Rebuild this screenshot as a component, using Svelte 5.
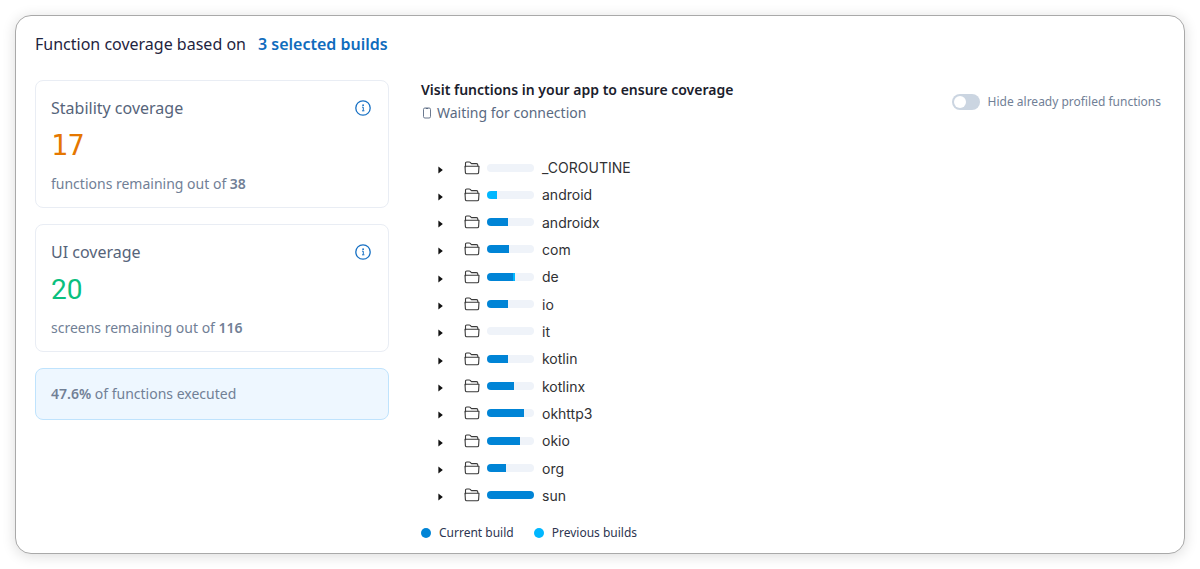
<script>
  const cards = [
    { id: 'stability', title: 'Stability coverage', value: 17, unit: 'functions', total: 38 },
    { id: 'ui', title: 'UI coverage', value: 20, unit: 'screens', total: 116 }
  ];

  const packages = [
    { name: '_COROUTINE', current: 0, previous: 0 },
    { name: 'android', current: 0, previous: 21 },
    { name: 'androidx', current: 45, previous: 0 },
    { name: 'com', current: 47, previous: 0 },
    { name: 'de', current: 55, previous: 4 },
    { name: 'io', current: 44, previous: 0 },
    { name: 'it', current: 0, previous: 0 },
    { name: 'kotlin', current: 44, previous: 0 },
    { name: 'kotlinx', current: 57, previous: 0 },
    { name: 'okhttp3', current: 79, previous: 0 },
    { name: 'okio', current: 71, previous: 0 },
    { name: 'org', current: 40, previous: 0 },
    { name: 'sun', current: 100, previous: 0 }
  ];

  let hideProfiled = $state(false);
</script>

<main class="panel">
  <header>
    <h1>Function coverage based on</h1>
    <a href="#builds">3 selected builds</a>
  </header>

  <div class="columns">
    <section class="summary">
      {#each cards as card (card.id)}
        <article class="card">
          <div class="card-head">
            <h2>{card.title}</h2>
            <button class="info" type="button" aria-label="About {card.title}">
              <svg viewBox="0 0 16 16" width="16" height="16" fill="none" stroke="currentColor">
                <circle cx="8" cy="8" r="7.2" stroke-width="1.3" />
                <path d="M7 7.2h1.3v3.4M7 10.8h2.4" stroke-width="1" />
                <circle cx="8.1" cy="5.2" r=".9" fill="currentColor" stroke="none" />
              </svg>
            </button>
          </div>
          <p class="value {card.id}">{card.value}</p>
          <p class="note">{card.unit} remaining out of <strong>{card.total}</strong></p>
        </article>
      {/each}
      <p class="executed note"><strong>47.6%</strong> of functions executed</p>
    </section>

    <section class="detail">
      <div class="detail-head">
        <div>
          <h2 class="visit">Visit functions in your app to ensure coverage</h2>
          <p class="status">
            <svg viewBox="0 0 12 16" width="12" height="16" fill="none" stroke="currentColor">
              <rect x="2.5" y="3" width="7" height="10" rx="1.4" stroke-width=".9" />
              <path d="M4.8 3.5h2.4" stroke-width="1" />
            </svg>
            Waiting for connection
          </p>
        </div>
        <label class="switch">
          <input type="checkbox" role="switch" bind:checked={hideProfiled} />
          Hide already profiled functions
        </label>
      </div>

      <ul class="tree">
        {#each packages as item (item.name)}
          <li>
            <button class="toggle" type="button" aria-label="Expand {item.name}">
              <svg viewBox="0 0 5 8" width="5" height="8"><path d="M.4 .6 4.8 4 .4 7.4z" fill="currentColor" /></svg>
            </button>
            <svg class="folder" viewBox="0 0 16 14" width="16" height="14" fill="none" stroke="currentColor" stroke-width="1.1" stroke-linejoin="round">
              <path d="M1.5 6.2V2.2Q1.5 1 2.7 1h2.6q.5 0 .9.4l1.2 1.2h5q1.4 0 1.4 1.3v1.3" />
              <path d="M1 5.2h14l-.4 6.4q-.1 1.2-1.3 1.2H2.7q-1.2 0-1.3-1.2z" />
            </svg>
            <span class="bar">
              <span class="current" style="width: {item.current}%"></span>
              <span class="previous" style="width: {item.previous}%"></span>
            </span>
            <span class="name">{item.name}</span>
          </li>
        {/each}
      </ul>

      <div class="legend">
        <span class="key"><i class="current"></i>Current build</span>
        <span class="key"><i class="previous"></i>Previous builds</span>
      </div>
    </section>
  </div>
</main>

<style>
  :global(body) {
    background: #fff;
  }
  h1, h2, p, ul {
    margin: 0;
    padding: 0;
    font-weight: 400;
  }
  button {
    display: flex;
    padding: 0;
    border: 0;
    background: none;
    cursor: pointer;
  }
  strong {
    font-weight: 600;
  }
  .panel {
    box-sizing: border-box;
    margin: 15px;
    padding: 16px 20px 10px 19px;
    border: 1px solid #a9a9a9;
    border-radius: 16px;
    background: #fff;
    box-shadow: 0 2px 14px rgba(0, 0, 0, 0.14);
    font: 14px/20px "Noto Sans", sans-serif;
    color: #1a202c;
  }
  header {
    display: flex;
    gap: 12px;
    line-height: 24px;
  }
  h1 {
    font-size: 16px;
    line-height: 24px;
    color: #1f2440;
  }
  header a {
    font-size: 16px;
    font-weight: 600;
    color: #0f6cbd;
    text-decoration: none;
  }
  .columns {
    display: grid;
    grid-template-columns: 354px 1fr;
    gap: 32px;
    margin-top: 24px;
  }
  .summary {
    display: flex;
    flex-direction: column;
    gap: 16px;
  }
  .card {
    padding: 15px 15px 13px;
    border: 1px solid #e9edf4;
    border-radius: 8px;
  }
  .card-head {
    display: flex;
    align-items: center;
    justify-content: space-between;
    padding-right: 2px;
  }
  .card h2 {
    font-size: 16px;
    line-height: 24px;
    color: #56647a;
  }
  .info {
    color: #1871c4;
  }
  .value {
    margin: 6px 0 8px;
    font-size: 28px;
    line-height: 40px;
  }
  .stability {
    font-family: "DejaVu Sans Mono", monospace;
    color: #e57700;
  }
  .ui {
    font-family: Roboto, sans-serif;
    color: #0abf7e;
  }
  .note {
    color: #718096;
  }
  .executed {
    padding: 15px;
    border: 1px solid #bfe3fd;
    border-radius: 8px;
    background: #eef7ff;
  }
  .detail-head {
    display: flex;
    justify-content: space-between;
    align-items: center;
    padding-right: 3px;
  }
  .visit {
    font-size: 14px;
    font-weight: 600;
    line-height: 20px;
  }
  .status {
    display: flex;
    align-items: center;
    gap: 4px;
    margin-top: 3px;
    color: #5a6a82;
  }
  .switch {
    display: flex;
    align-items: center;
    gap: 8px;
    font-size: 12px;
    color: #718096;
  }
  .switch input {
    display: flex;
    align-items: center;
    box-sizing: border-box;
    width: 28px;
    height: 16px;
    margin: 0;
    padding: 2px;
    appearance: none;
    border-radius: 8px;
    background: #cbd5e1;
    cursor: pointer;
  }
  .switch input::before {
    content: "";
    width: 12px;
    height: 12px;
    border-radius: 50%;
    background: #fff;
  }
  .switch input:checked {
    justify-content: flex-end;
    background: #0085d6;
  }
  .tree {
    display: flex;
    flex-direction: column;
    justify-content: space-between;
    min-height: 355px;
    margin-top: 31px;
    padding-left: 17px;
    list-style: none;
  }
  .tree li {
    display: flex;
    align-items: center;
    line-height: 27px;
  }
  .toggle {
    width: 26px;
    padding-top: 4px;
    color: #111;
  }
  .folder {
    color: #3a3a3a;
  }
  .bar {
    display: flex;
    width: 47px;
    height: 8px;
    margin: 0 8px 0 7px;
    border-radius: 4px;
    overflow: hidden;
    background: #eff3f9;
  }
  .current {
    background: #0084d6;
  }
  .previous {
    background: #00b7ff;
  }
  .name {
    font-family: Inter, sans-serif;
    color: #303134;
  }
  .legend {
    display: flex;
    gap: 20px;
    margin-top: 14px;
    font-size: 12px;
    color: #2d3550;
  }
  .key {
    display: flex;
    align-items: center;
    gap: 8px;
  }
  .key i {
    width: 10px;
    height: 10px;
    border-radius: 50%;
  }
</style>
